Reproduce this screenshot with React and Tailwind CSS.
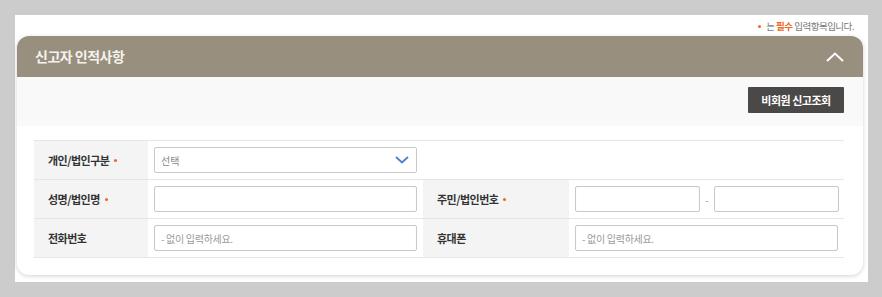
import React from "react";

const font = { fontFamily: '"Noto Sans CJK KR", "Noto Sans", sans-serif' };

function Dot({ className = "" }) {
  return <span className={"inline-block w-[3px] h-[3px] rounded-full bg-[#f26522] " + className} />;
}

function Req() {
  return <Dot className="ml-[5px]" />;
}

function Th({ children }) {
  return (
    <div className="flex items-center bg-[#f4f4f4] pl-[14px] text-[11px] font-bold text-[#333] tracking-[-0.5px]">
      {children}
    </div>
  );
}

function Input({ placeholder, className = "" }) {
  return (
    <div
      className={
        "h-[26px] border border-[#c9c9c9] rounded-[2px] bg-white flex items-center pl-[6px] text-[10px] text-[#9a9a9a] tracking-[-0.3px] shadow-[inset_0_0_1px_rgba(0,0,0,0.08)] " +
        className
      }
    >
      {placeholder}
    </div>
  );
}

export default function App() {
  return (
    <div className="w-[882px] h-[297px] bg-[#cccccc] pt-[15px] overflow-hidden" style={font}>
      <div className="ml-[15px] w-[853px] h-[267px] bg-white">
        <div className="h-[21px] flex items-center justify-end pr-[14px] text-[9.5px] text-[#777] tracking-[-0.5px] pt-[2px]">
          <Dot className="mr-[5px]" />
          <span>는&nbsp;</span>
          <span className="text-[#f26522] font-bold">필수</span>
          <span>&nbsp;입력항목입니다.</span>
        </div>
        <div className="ml-[2px] w-[846px] h-[239px] rounded-[12px] bg-white shadow-[0_1px_4px_rgba(0,0,0,0.18)] overflow-hidden">
          <div className="h-[41px] bg-[#998f7e] flex items-center justify-between pl-[18px] pr-[19px]">
            <span className="text-[14px] text-[#f4f2ee] font-bold tracking-[-0.5px]">신고자 인적사항</span>
            <svg width="18" height="10" viewBox="0 0 18 10" fill="none">
              <path d="M1 9L9 1.5L17 9" stroke="white" strokeWidth="2" />
            </svg>
          </div>
          <div className="h-[49px] bg-[#f9f9f9] flex items-start justify-end pr-[19px] pt-[10px]">
            <div className="w-[96px] h-[26px] bg-[#4b4948] rounded-[1px] flex items-center justify-center text-[11px] font-bold text-white tracking-[-0.5px]">
              비회원 신고조회
            </div>
          </div>
          <div className="ml-[17px] mt-[14px] w-[810px] border-t border-[#e6e6e6]">
            <div className="grid grid-cols-[114px_275px_146px_275px] h-[39px] border-b border-[#e6e6e6]">
              <Th>
                개인/법인구분<Req />
              </Th>
              <div className="flex items-center pl-[6px]">
                <div className="w-[263px] h-[26px] border border-[#c9c9c9] rounded-[2px] flex items-center justify-between pl-[6px] pr-[7px] text-[10px] text-[#888]">
                  <span>선택</span>
                  <svg width="14" height="8" viewBox="0 0 14 8" fill="none">
                    <path d="M1 1L7 6.5L13 1" stroke="#4f7fd1" strokeWidth="1.8" />
                  </svg>
                </div>
              </div>
              <div className="col-span-2" />
            </div>
            <div className="grid grid-cols-[114px_275px_146px_275px] h-[39px] border-b border-[#e6e6e6]">
              <Th>
                성명/법인명<Req />
              </Th>
              <div className="flex items-center pl-[6px]">
                <Input className="w-[263px]" />
              </div>
              <Th>
                주민/법인번호<Req />
              </Th>
              <div className="flex items-center pl-[6px]">
                <Input className="w-[125px]" />
                <span className="w-[14px] text-center text-[10px] text-[#999]">-</span>
                <Input className="w-[125px]" />
              </div>
            </div>
            <div className="grid grid-cols-[114px_275px_146px_275px] h-[39px] border-b border-[#e6e6e6]">
              <Th>전화번호</Th>
              <div className="flex items-center pl-[6px]">
                <Input className="w-[263px]" placeholder="- 없이 입력하세요." />
              </div>
              <Th>휴대폰</Th>
              <div className="flex items-center pl-[6px]">
                <Input className="w-[263px]" placeholder="- 없이 입력하세요." />
              </div>
            </div>
          </div>
        </div>
      </div>
    </div>
  );
}
